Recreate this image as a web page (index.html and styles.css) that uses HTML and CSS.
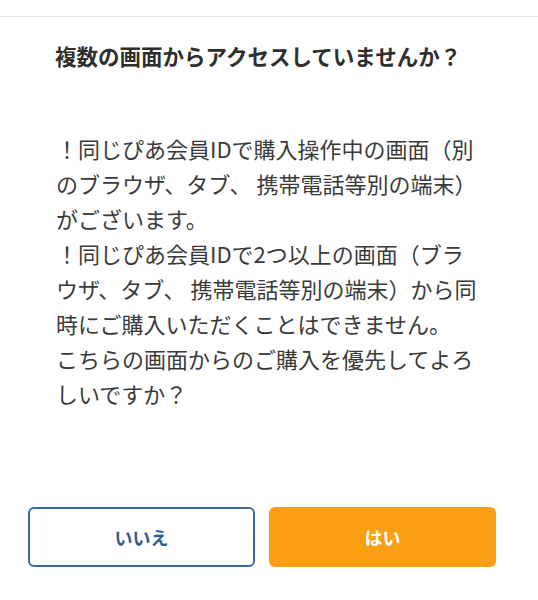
FILE: index.html
```html
<!DOCTYPE html>
<html lang="ja">

<head>
	<meta charset="UTF-8">
	<meta name="viewport" content="width=device-width, initial-scale=1.0">
	<title>多重アクセス確認</title>
	<link rel="stylesheet" href="styles.css">
</head>

<body>
	<div class="topbar"></div>
	<div class="dialog">
		<h1 class="title">複数の画面からアクセスしていませんか？</h1>
		<p class="message">！同じぴあ会員IDで購入操作中の画面（別のブラウザ、タブ、 携帯電話等別の端末）がございます。<br>！同じぴあ会員IDで2つ以上の画面（ブラウザ、タブ、 携帯電話等別の端末）から同時にご購入いただくことはできません。<br>こちらの画面からのご購入を優先してよろしいですか？</p>
		<div class="actions">
			<button class="btn btn-no">いいえ</button>
			<button class="btn btn-yes">はい</button>
		</div>
	</div>
</body>

</html>
```

FILE: styles.css
```css
* {
	margin: 0px;
	padding: 0px;
	box-sizing: border-box;
}

body {
	background-color: #ffffff;
	font-family: "Noto Sans CJK JP", "Noto Sans", sans-serif;
	color: #333333;
}

.topbar {
	height: 17px;
	border-bottom: 1px solid #e4e4e4;
}

.dialog {
	padding-top: 24px;
}

.title {
	padding-left: 55px;
	font-size: 21.5px;
	line-height: 30px;
	font-weight: bold;
	color: #2e2e2e;
}

.message {
	margin-top: 60px;
	padding-left: 56px;
	width: 484px;
	font-size: 22px;
	line-height: 35px;
	color: #3a3a3a;
}

.actions {
	display: flex;
	gap: 14px;
	margin-top: 96px;
	padding-left: 28px;
	padding-right: 42px;
}

.btn {
	flex: 1;
	height: 60px;
	border-radius: 6px;
	font-family: inherit;
	font-size: 18px;
	font-weight: bold;
	cursor: pointer;
}

.btn-no {
	background-color: #ffffff;
	border: 2px solid #3b6c9f;
	color: #2f5f8f;
}

.btn-yes {
	background-color: #fa9f12;
	border: 2px solid #fa9f12;
	color: #ffffff;
}
```
